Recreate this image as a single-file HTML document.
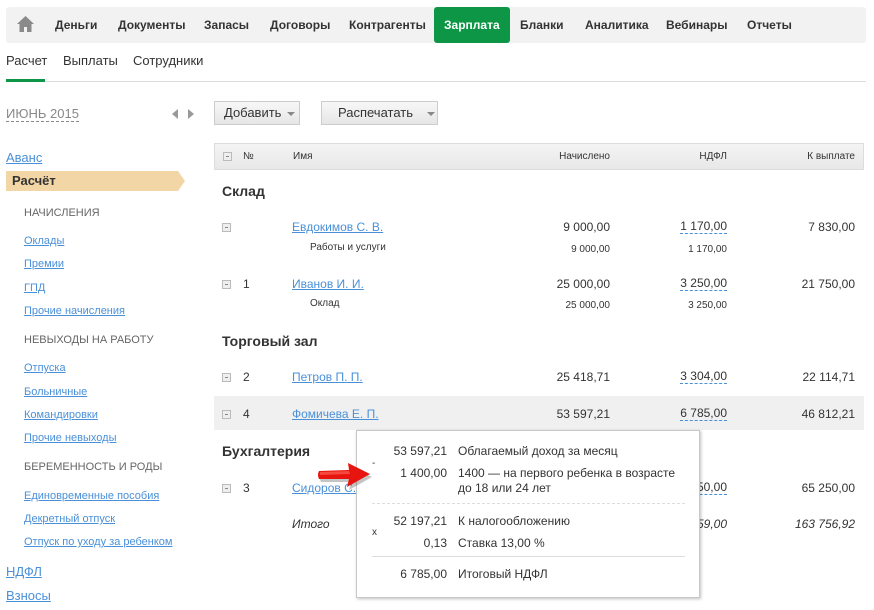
<!DOCTYPE html>
<html><head><meta charset="utf-8"><style>
*{margin:0;padding:0;box-sizing:border-box}
body{width:874px;height:610px;background:#fff;position:relative;overflow:hidden;font-family:"Liberation Sans",Arial,sans-serif;color:#333}
.a{position:absolute;white-space:nowrap;line-height:14px}
.r{text-align:right}
.nav{position:absolute;left:6px;top:7px;width:860px;height:36px;background:#f2f2f2;border-radius:3px}
.ni{font-size:12px;font-weight:bold;color:#333;top:18px}
.lk{color:#4a90d9;text-decoration:underline}
.sb{font-size:11px}
.cap{font-size:11px;color:#666}
.n13{font-size:12px;color:#333}
.dash{border-bottom:1px dashed #4a90d9;line-height:13px}
.sm{font-size:10px;color:#333}
.ico{position:absolute;width:9px;height:9px;border:1px solid #bbb;background:#eee}
.ico:after{content:"";position:absolute;left:2px;top:3px;width:3px;height:1px;background:#888}
.btn{position:absolute;top:101px;height:24px;border:1px solid #ccc;background:linear-gradient(#f7f7f7,#e6e6e6);font-size:13px;line-height:22px;color:#333;padding-left:9px}
.tri{display:inline-block;width:0;height:0;border-left:4px solid transparent;border-right:4px solid transparent;border-top:4px solid #888;vertical-align:middle;margin-left:6px}
.pop{position:absolute;left:356px;top:430px;width:344px;height:168px;background:#fff;border:1px solid #c8c8c8;box-shadow:1px 1px 3px rgba(0,0,0,.25)}
.pt{font-size:12px;color:#333}
</style></head><body>
<div class="nav"></div>
<svg style="position:absolute;left:16px;top:15px" width="19" height="18" viewBox="0 0 19 18"><path d="M9.5 1 L18 9 L15.5 9 L15.5 17 L11 17 L11 12 L8 12 L8 17 L3.5 17 L3.5 9 L1 9 Z" fill="#8a8a8a"/></svg>
<div class="a ni" style="left:55px">Деньги</div>
<div class="a ni" style="left:118px">Документы</div>
<div class="a ni" style="left:204px">Запасы</div>
<div class="a ni" style="left:270px">Договоры</div>
<div class="a ni" style="left:349px">Контрагенты</div>
<div style="position:absolute;left:434px;top:7px;width:76px;height:36px;background:#0c9646;border-radius:3px"></div>
<div class="a ni" style="left:444px;color:#fff">Зарплата</div>
<div class="a ni" style="left:520px">Бланки</div>
<div class="a ni" style="left:585px">Аналитика</div>
<div class="a ni" style="left:666px">Вебинары</div>
<div class="a ni" style="left:747px">Отчеты</div>

<div class="a" style="left:6px;top:54px;font-size:13px">Расчет</div>
<div class="a" style="left:63px;top:54px;font-size:13px">Выплаты</div>
<div class="a" style="left:133px;top:54px;font-size:13px">Сотрудники</div>
<div style="position:absolute;left:6px;top:81px;width:860px;height:1px;background:#ddd"></div>
<div style="position:absolute;left:6px;top:79px;width:39px;height:3px;background:#0c9646"></div>

<div class="a" style="left:6px;top:107px;font-size:13px;color:#888;border-bottom:1px dashed #888">ИЮНЬ 2015</div>
<div style="position:absolute;left:172px;top:109px;border-top:5px solid transparent;border-bottom:5px solid transparent;border-right:6px solid #999"></div>
<div style="position:absolute;left:188px;top:109px;border-top:5px solid transparent;border-bottom:5px solid transparent;border-left:6px solid #999"></div>

<div class="a lk" style="left:6px;top:151px;font-size:13px">Аванс</div>
<div style="position:absolute;left:6px;top:171px;width:172px;height:20px;background:#f3d6a6"></div>
<div style="position:absolute;left:178px;top:171px;border-top:10px solid transparent;border-bottom:10px solid transparent;border-left:7px solid #f3d6a6"></div>
<div class="a" style="left:12px;top:174px;font-size:13px;font-weight:bold">Расчёт</div>
<div class="a cap" style="left:24px;top:206px">НАЧИСЛЕНИЯ</div>
<div class="a lk sb" style="left:24px;top:234px">Оклады</div>
<div class="a lk sb" style="left:24px;top:257px">Премии</div>
<div class="a lk sb" style="left:24px;top:281px">ГПД</div>
<div class="a lk sb" style="left:24px;top:304px">Прочие начисления</div>
<div class="a cap" style="left:24px;top:333px">НЕВЫХОДЫ НА РАБОТУ</div>
<div class="a lk sb" style="left:24px;top:361px">Отпуска</div>
<div class="a lk sb" style="left:24px;top:385px">Больничные</div>
<div class="a lk sb" style="left:24px;top:408px">Командировки</div>
<div class="a lk sb" style="left:24px;top:431px">Прочие невыходы</div>
<div class="a cap" style="left:24px;top:460px">БЕРЕМЕННОСТЬ И РОДЫ</div>
<div class="a lk sb" style="left:24px;top:489px">Единовременные пособия</div>
<div class="a lk sb" style="left:24px;top:512px">Декретный отпуск</div>
<div class="a lk sb" style="left:24px;top:535px">Отпуск по уходу за ребенком</div>
<div class="a lk" style="left:6px;top:565px;font-size:13px">НДФЛ</div>
<div class="a lk" style="left:6px;top:589px;font-size:13px">Взносы</div>

<div class="btn" style="left:214px;width:86px">Добавить<span class="tri"></span></div>
<div class="btn" style="left:321px;width:117px;padding-left:16px">Распечатать<span class="tri" style="margin-left:14px"></span></div>

<div style="position:absolute;left:214px;top:143px;width:650px;height:27px;border:1px solid #ddd;background:linear-gradient(#f4f4f4,#e8e8e8)"></div>
<div class="ico" style="left:223px;top:152px"></div>
<div class="a sm" style="left:243px;top:150px">№</div>
<div class="a sm" style="left:293px;top:150px">Имя</div>
<div class="a sm r" style="right:264px;top:150px">Начислено</div>
<div class="a sm r" style="right:147px;top:150px">НДФЛ</div>
<div class="a sm r" style="right:19px;top:150px">К выплате</div>

<div class="a" style="left:222px;top:184px;font-size:14px;font-weight:bold">Склад</div>
<div class="ico" style="left:222px;top:223px"></div>
<div class="a lk n13" style="left:292px;top:220px;color:#4a90d9">Евдокимов С. В.</div>
<div class="a n13 r" style="right:264px;top:220px">9 000,00</div>
<div class="a n13 r dash" style="right:147px;top:220px">1 170,00</div>
<div class="a n13 r" style="right:19px;top:220px">7 830,00</div>
<div class="a sm" style="left:310px;top:241px">Работы и услуги</div>
<div class="a sm r" style="right:264px;top:243px">9 000,00</div>
<div class="a sm r" style="right:147px;top:243px">1 170,00</div>

<div class="ico" style="left:222px;top:280px"></div>
<div class="a n13" style="left:243px;top:277px">1</div>
<div class="a lk n13" style="left:292px;top:277px;color:#4a90d9">Иванов И. И.</div>
<div class="a n13 r" style="right:264px;top:277px">25 000,00</div>
<div class="a n13 r dash" style="right:147px;top:277px">3 250,00</div>
<div class="a n13 r" style="right:19px;top:277px">21 750,00</div>
<div class="a sm" style="left:310px;top:297px">Оклад</div>
<div class="a sm r" style="right:264px;top:299px">25 000,00</div>
<div class="a sm r" style="right:147px;top:299px">3 250,00</div>

<div class="a" style="left:222px;top:334px;font-size:14px;font-weight:bold">Торговый зал</div>
<div class="ico" style="left:222px;top:373px"></div>
<div class="a n13" style="left:243px;top:370px">2</div>
<div class="a lk n13" style="left:292px;top:370px;color:#4a90d9">Петров П. П.</div>
<div class="a n13 r" style="right:264px;top:370px">25 418,71</div>
<div class="a n13 r dash" style="right:147px;top:370px">3 304,00</div>
<div class="a n13 r" style="right:19px;top:370px">22 114,71</div>

<div style="position:absolute;left:214px;top:396px;width:650px;height:34px;background:#f0f0f0"></div>
<div class="ico" style="left:222px;top:410px"></div>
<div class="a n13" style="left:243px;top:407px">4</div>
<div class="a lk n13" style="left:292px;top:407px;color:#4a90d9">Фомичева Е. П.</div>
<div class="a n13 r" style="right:264px;top:407px">53 597,21</div>
<div class="a n13 r dash" style="right:147px;top:407px">6 785,00</div>
<div class="a n13 r" style="right:19px;top:407px">46 812,21</div>

<div class="a" style="left:222px;top:444px;font-size:14px;font-weight:bold">Бухгалтерия</div>
<div class="ico" style="left:222px;top:484px"></div>
<div class="a n13" style="left:243px;top:481px">3</div>
<div class="a lk n13" style="left:292px;top:481px;color:#4a90d9">Сидоров С. С.</div>
<div class="a n13 r dash" style="right:147px;top:481px">8 450,00</div>
<div class="a n13 r" style="right:19px;top:481px">65 250,00</div>
<div class="a n13" style="left:292px;top:517px;font-style:italic">Итого</div>
<div class="a n13 r" style="right:147px;top:517px;font-style:italic">22 159,00</div>
<div class="a n13 r" style="right:19px;top:517px;font-style:italic">163 756,92</div>

<div class="pop">
<div class="a pt r" style="right:252px;top:13px">53 597,21</div>
<div class="a pt" style="left:101px;top:13px">Облагаемый доход за месяц</div>
<div class="a pt" style="left:15px;top:26px;font-size:10px">-</div>
<div class="a pt r" style="right:252px;top:35px">1 400,00</div>
<div class="a pt" style="left:101px;top:35px">1400 — на первого ребенка в возрасте</div>
<div class="a pt" style="left:101px;top:50px">до 18 или 24 лет</div>
<div style="position:absolute;left:15px;top:72px;width:313px;border-top:1px dashed #ddd"></div>
<div class="a pt r" style="right:252px;top:83px">52 197,21</div>
<div class="a pt" style="left:101px;top:83px">К налогообложению</div>
<div class="a pt" style="left:15px;top:95px;font-size:10px">x</div>
<div class="a pt r" style="right:252px;top:105px">0,13</div>
<div class="a pt" style="left:101px;top:105px">Ставка 13,00 %</div>
<div style="position:absolute;left:15px;top:125px;width:313px;border-top:1px solid #ddd"></div>
<div class="a pt r" style="right:252px;top:136px">6 785,00</div>
<div class="a pt" style="left:101px;top:136px">Итоговый НДФЛ</div>
</div>

<svg style="position:absolute;left:316px;top:462px" width="58" height="28" viewBox="0 0 58 28"><path d="M3 10 Q2 14 4 18 L34 18 L32 26 L55 13 L33 2 L34 9 Z" fill="#555" opacity=".35" transform="translate(1,2)"/><path d="M3 9 Q1 13 3 17 L33 17 L31 25 L54 12 L32 1 L33 8 Z" fill="#e8140f"/><path d="M4 10 L33 9 L34 12 L4 13 Z" fill="#ff6a5a" opacity=".6"/></svg>
</body></html>
